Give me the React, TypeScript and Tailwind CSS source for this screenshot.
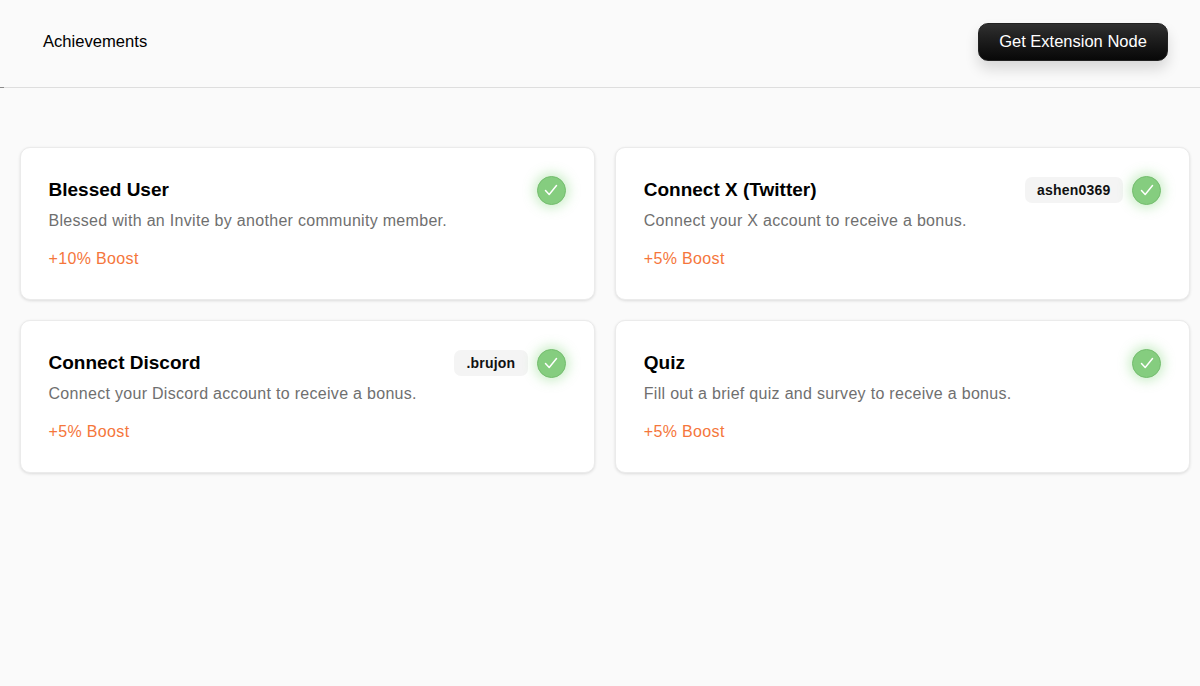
const achievements = [
  { title: 'Blessed User', text: 'Blessed with an Invite by another community member.', boost: '+10% Boost' },
  { title: 'Connect X (Twitter)', text: 'Connect your X account to receive a bonus.', boost: '+5% Boost', tag: 'ashen0369' },
  { title: 'Connect Discord', text: 'Connect your Discord account to receive a bonus.', boost: '+5% Boost', tag: '.brujon' },
  { title: 'Quiz', text: 'Fill out a brief quiz and survey to receive a bonus.', boost: '+5% Boost' },
];

const Check = () => (
  <div className="w-[29px] h-[29px] rounded-full bg-[#85cd7f] border border-[#74bd6e] shadow-[0_0_12px_3px_rgba(110,205,100,0.35)] flex items-center justify-center">
    <svg width="16" height="16" viewBox="0 0 16 16" fill="none" stroke="#ffffff" strokeWidth="1.5" strokeLinecap="round" strokeLinejoin="round">
      <path d="M2.5 8.5 L6.2 12.5 L13.5 3.5" />
    </svg>
  </div>
);

const Card = ({ title, text, boost, tag }: { title: string; text: string; boost: string; tag?: string }) => (
  <div className="h-[153px] bg-white border border-[#ebebeb] rounded-[10px] shadow-[0_1px_3px_rgba(0,0,0,0.12)] pl-[28px] pr-[28px] pt-[27px]">
    <div className="flex items-center justify-between h-[30px]">
      <h2 className="text-[19px] leading-[28px] font-bold text-black">{title}</h2>
      <div className="flex items-center gap-[9px]">
        {tag && (
          <span className="h-[26px] px-[12.5px] flex items-center rounded-[7px] bg-[#f4f4f4] text-[14px] font-bold tracking-[0.2px] text-[#111111]">
            {tag}
          </span>
        )}
        <Check />
      </div>
    </div>
    <p className="mt-[4px] text-[16px] leading-[24px] tracking-[0.3px] text-[#6f6f6f]">{text}</p>
    <p className="mt-[14px] text-[16px] leading-[24px] tracking-[0.35px] text-[#f5763b]">{boost}</p>
  </div>
);

const App = () => {
  return (
    <div className="min-h-[686px] bg-[#fafafa] font-['Liberation_Sans',Arial,sans-serif]">
      {/* Header */}
      <header className="relative h-[88px] border-b border-[#dedede] flex items-start justify-between pl-[43px] pr-[32px]">
        <span className="mt-[32px] text-[16.6px] leading-[20px] text-black">Achievements</span>
        <button className="mt-[23px] w-[190px] h-[38px] pb-[2px] rounded-[10px] bg-gradient-to-b from-[#303030] to-[#080808] border border-[#222222] text-[16.5px] text-white shadow-[0_8px_14px_rgba(0,0,0,0.14)]">
          Get Extension Node
        </button>
        <div className="absolute left-0 bottom-[-1px] w-[4px] h-[1px] bg-[#8a8a8a]" />
      </header>

      {/* Achievements */}
      <div className="grid grid-cols-2 gap-[20px] pl-[19.5px] pr-[10px] pt-[59px]">
        {achievements.map((a) => (
          <Card key={a.title} {...a} />
        ))}
      </div>
    </div>
  );
};

export default App;
